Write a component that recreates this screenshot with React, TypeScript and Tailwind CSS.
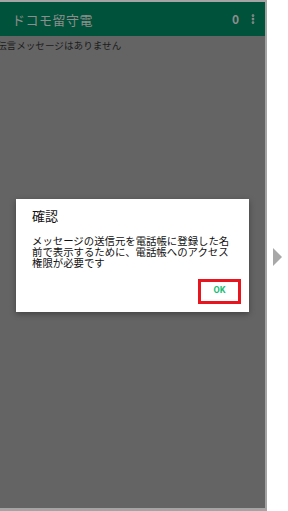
import { EllipsisVertical } from 'lucide-react'

const jp = '"Noto Sans CJK JP", "Noto Sans", sans-serif'

export default function App() {
  return (
    <div className="w-[288px] h-[511px] bg-white flex overflow-hidden" style={{ fontFamily: jp }}>
      {/* Phone screen */}
      <div className="relative w-[267px] h-[511px] shrink-0 border-t-2 border-r-2 border-b-[3px] border-[#a4a4a4] bg-[#646464] flex flex-col overflow-hidden">
        <header className="h-[34px] shrink-0 bg-[#00523a] flex items-center pl-[12px] pr-[6px]">
          <h1 className="flex-1 text-[13px] leading-none text-[#8d8d8d] tracking-[0.5px]">ドコモ留守電</h1>
          <span className="text-[12px] font-bold text-[#8d8d8d] mr-[8px]">0</span>
          <EllipsisVertical className="w-[12px] h-[14px] text-[#8d8d8d]" strokeWidth={3.5} />
        </header>
        <p className="ml-[-3px] mt-[2px] text-[9.6px] leading-[14px] text-[#1c1c1c]">伝言メッセージはありません</p>

        {/* Dialog */}
        <div className="absolute inset-0 flex items-center justify-center">
          <div className="w-[233px] bg-white shadow-[0_2px_6px_rgba(0,0,0,0.35)] pt-[8px] pb-[8px] pl-[16px] pr-[8px]">
            <h2 className="text-[13px] leading-[18px] text-[#111]">確認</h2>
            <p className="mt-[10px] pr-[8px] text-[10.4px] leading-[11px] text-[#111]">
              メッセージの送信元を電話帳に登録した名前で表示するために、電話帳へのアクセス権限が必要です
            </p>
            <div className="mt-[11px] flex justify-end">
              <button className="w-[43px] h-[25px] border-[3px] border-[#e8151f] flex items-center justify-center text-[9px] font-bold text-[#16bd76]" style={{ fontFamily: '"Roboto", sans-serif' }}>
                OK
              </button>
            </div>
          </div>
        </div>
      </div>

      {/* Next arrow */}
      <div className="flex-1 flex items-center justify-center">
        <svg width="9" height="18" viewBox="0 0 9 18" className="mt-[2px]">
          <polygon points="0,0 9,9 0,18" fill="#a8a8a8" />
        </svg>
      </div>
    </div>
  )
}
